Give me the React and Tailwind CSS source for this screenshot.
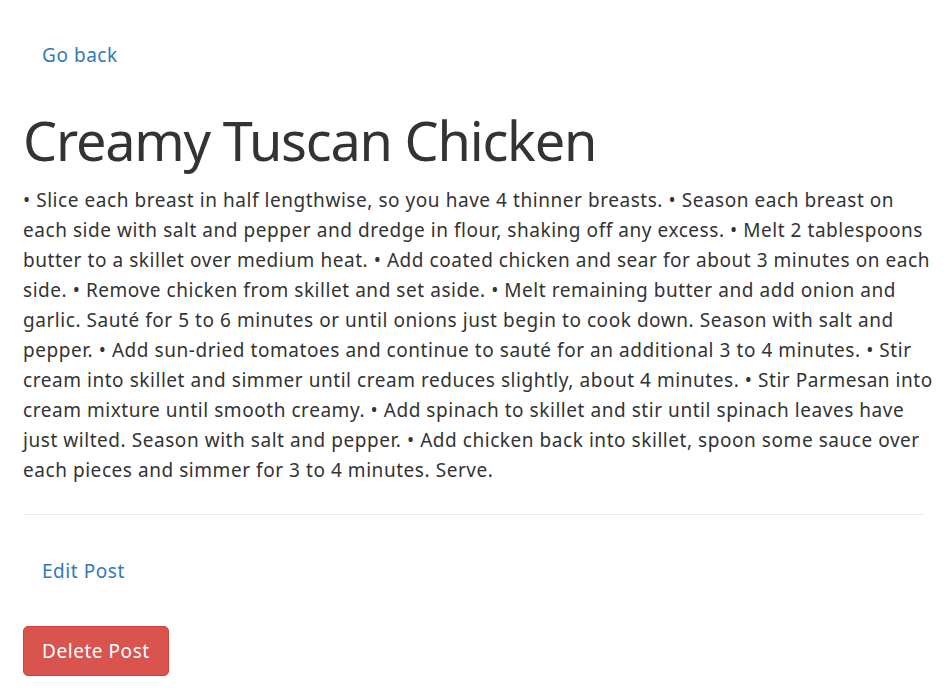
export default function App() {
  const lines = [
    "• Slice each breast in half lengthwise, so you have 4 thinner breasts. • Season each breast on",
    "each side with salt and pepper and dredge in flour, shaking off any excess. • Melt 2 tablespoons",
    "butter to a skillet over medium heat. • Add coated chicken and sear for about 3 minutes on each",
    "side. • Remove chicken from skillet and set aside. • Melt remaining butter and add onion and",
    "garlic. Sauté for 5 to 6 minutes or until onions just begin to cook down. Season with salt and",
    "pepper. • Add sun-dried tomatoes and continue to sauté for an additional 3 to 4 minutes. • Stir",
    "cream into skillet and simmer until cream reduces slightly, about 4 minutes. • Stir Parmesan into",
    "cream mixture until smooth creamy. • Add spinach to skillet and stir until spinach leaves have",
    "just wilted. Season with salt and pepper. • Add chicken back into skillet, spoon some sauce over",
    "each pieces and simmer for 3 to 4 minutes. Serve.",
  ]

  return (
    <div className="min-h-screen bg-white px-[23px] pt-[32px] text-[#333] font-['Noto_Sans',sans-serif] text-[19px] leading-[30px] tracking-[0.55px]">
      {/* back link */}
      <a href="#" className="inline-block px-[19px] py-[8px] text-[#3379b7]">Go back</a>

      <h1 className="mt-[31px] text-[54px] leading-[62px] font-normal tracking-[-1.2px]">Creamy Tuscan Chicken</h1>

      <div className="mt-[14px] whitespace-nowrap">
        {lines.map((line, i) => (
          <div key={i}>{line}</div>
        ))}
      </div>

      <hr className="mt-[29px] border-t border-[#eee]" />

      <div className="mt-[33px]">
        <a href="#" className="inline-block px-[19px] py-[8px] text-[#3379b7]">Edit Post</a>
      </div>

      <button className="mt-[32px] h-[50px] px-[18px] rounded-[5px] border border-[#d43f3a] bg-[#d9534f] text-white">
        Delete Post
      </button>
    </div>
  )
}
